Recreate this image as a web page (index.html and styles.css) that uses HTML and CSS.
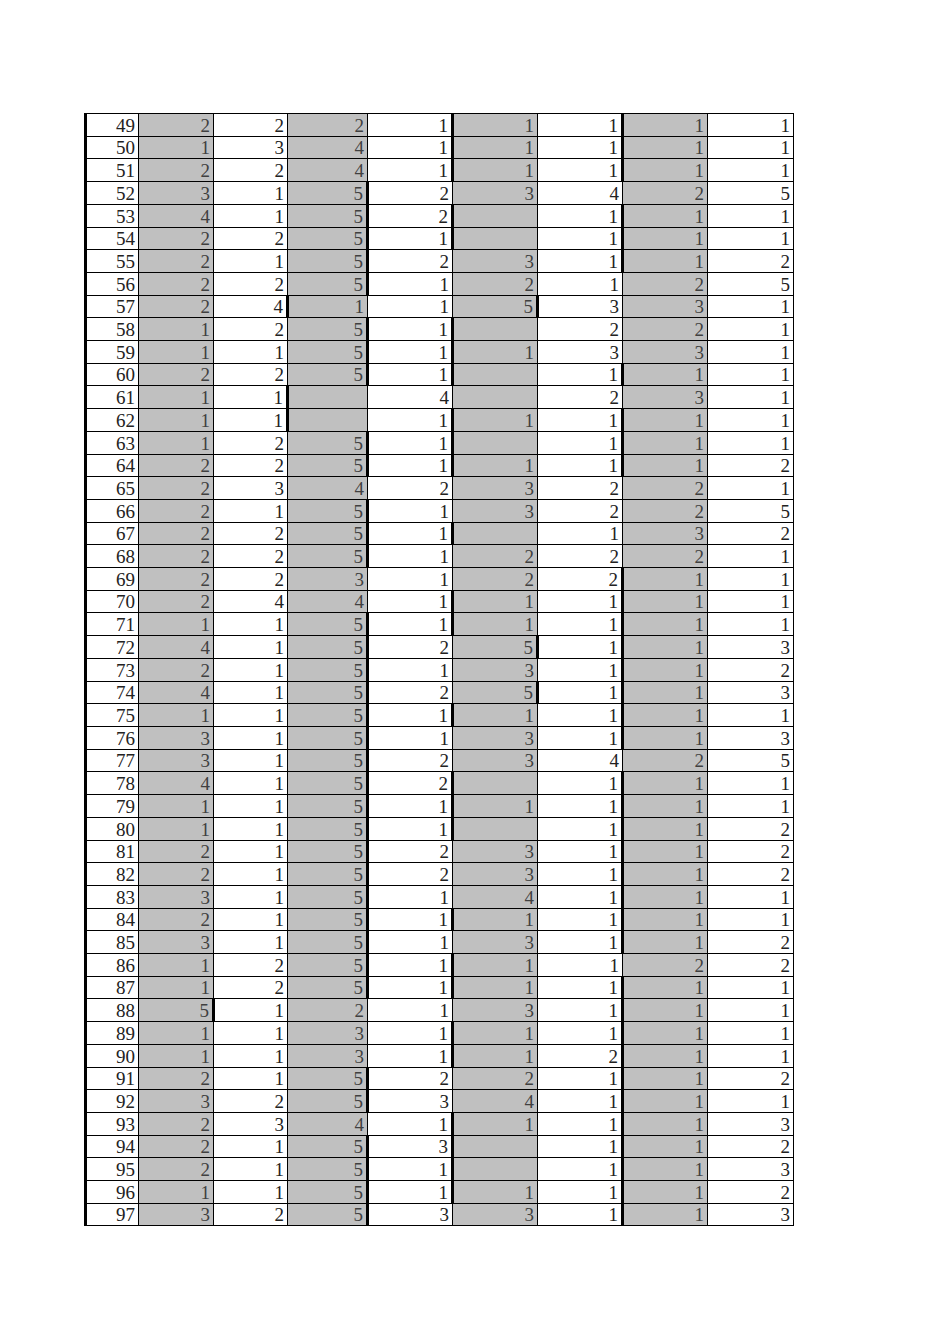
FILE: index.html
```html
<!DOCTYPE html>
<html lang="zh">
<head>
<meta charset="utf-8">
<title>Sheet</title>
<link rel="stylesheet" href="styles.css">
</head>
<body>
<div class="page">
<table class="sheet">
<colgroup>
<col class="c0"><col class="c1"><col class="c2"><col class="c3"><col class="c4"><col class="c5"><col class="c6"><col class="c7"><col class="c8">
</colgroup>
<tbody>
<tr><th>49</th><td class="g">2</td><td>2</td><td class="g">2</td><td>1</td><td class="g tl">1</td><td>1</td><td class="g tl">1</td><td>1</td></tr>
<tr><th>50</th><td class="g">1</td><td>3</td><td class="g">4</td><td>1</td><td class="g tl">1</td><td>1</td><td class="g tl">1</td><td>1</td></tr>
<tr><th>51</th><td class="g">2</td><td>2</td><td class="g">4</td><td>1</td><td class="g tl">1</td><td>1</td><td class="g tl">1</td><td>1</td></tr>
<tr><th>52</th><td class="g">3</td><td>1</td><td class="g tr">5</td><td>2</td><td class="g">3</td><td>4</td><td class="g">2</td><td>5</td></tr>
<tr><th>53</th><td class="g">4</td><td>1</td><td class="g tr">5</td><td>2</td><td class="g tl"></td><td>1</td><td class="g tl">1</td><td>1</td></tr>
<tr><th>54</th><td class="g">2</td><td>2</td><td class="g tr">5</td><td>1</td><td class="g tl"></td><td>1</td><td class="g tl">1</td><td>1</td></tr>
<tr><th>55</th><td class="g">2</td><td>1</td><td class="g tr">5</td><td>2</td><td class="g">3</td><td>1</td><td class="g tl">1</td><td>2</td></tr>
<tr><th>56</th><td class="g">2</td><td>2</td><td class="g tr">5</td><td>1</td><td class="g">2</td><td>1</td><td class="g">2</td><td>5</td></tr>
<tr><th>57</th><td class="g">2</td><td>4</td><td class="g tl">1</td><td>1</td><td class="g tr">5</td><td>3</td><td class="g">3</td><td>1</td></tr>
<tr><th>58</th><td class="g">1</td><td>2</td><td class="g tr">5</td><td>1</td><td class="g tl"></td><td>2</td><td class="g">2</td><td>1</td></tr>
<tr><th>59</th><td class="g">1</td><td>1</td><td class="g tr">5</td><td>1</td><td class="g tl">1</td><td>3</td><td class="g">3</td><td>1</td></tr>
<tr><th>60</th><td class="g">2</td><td>2</td><td class="g tr">5</td><td>1</td><td class="g tl"></td><td>1</td><td class="g tl">1</td><td>1</td></tr>
<tr><th>61</th><td class="g">1</td><td>1</td><td class="g tl"></td><td>4</td><td class="g"></td><td>2</td><td class="g">3</td><td>1</td></tr>
<tr><th>62</th><td class="g">1</td><td>1</td><td class="g tl"></td><td>1</td><td class="g tl">1</td><td>1</td><td class="g tl">1</td><td>1</td></tr>
<tr><th>63</th><td class="g">1</td><td>2</td><td class="g tr">5</td><td>1</td><td class="g tl"></td><td>1</td><td class="g tl">1</td><td>1</td></tr>
<tr><th>64</th><td class="g">2</td><td>2</td><td class="g tr">5</td><td>1</td><td class="g tl">1</td><td>1</td><td class="g tl">1</td><td>2</td></tr>
<tr><th>65</th><td class="g">2</td><td>3</td><td class="g">4</td><td>2</td><td class="g">3</td><td>2</td><td class="g">2</td><td>1</td></tr>
<tr><th>66</th><td class="g">2</td><td>1</td><td class="g tr">5</td><td>1</td><td class="g">3</td><td>2</td><td class="g">2</td><td>5</td></tr>
<tr><th>67</th><td class="g">2</td><td>2</td><td class="g tr">5</td><td>1</td><td class="g tl"></td><td>1</td><td class="g">3</td><td>2</td></tr>
<tr><th>68</th><td class="g">2</td><td>2</td><td class="g tr">5</td><td>1</td><td class="g">2</td><td>2</td><td class="g">2</td><td>1</td></tr>
<tr><th>69</th><td class="g">2</td><td>2</td><td class="g">3</td><td>1</td><td class="g">2</td><td>2</td><td class="g tl">1</td><td>1</td></tr>
<tr><th>70</th><td class="g">2</td><td>4</td><td class="g">4</td><td>1</td><td class="g tl">1</td><td>1</td><td class="g tl">1</td><td>1</td></tr>
<tr><th>71</th><td class="g">1</td><td>1</td><td class="g tr">5</td><td>1</td><td class="g tl">1</td><td>1</td><td class="g tl">1</td><td>1</td></tr>
<tr><th>72</th><td class="g">4</td><td>1</td><td class="g tr">5</td><td>2</td><td class="g tr">5</td><td>1</td><td class="g tl">1</td><td>3</td></tr>
<tr><th>73</th><td class="g">2</td><td>1</td><td class="g tr">5</td><td>1</td><td class="g">3</td><td>1</td><td class="g tl">1</td><td>2</td></tr>
<tr><th>74</th><td class="g">4</td><td>1</td><td class="g tr">5</td><td>2</td><td class="g tr">5</td><td>1</td><td class="g tl">1</td><td>3</td></tr>
<tr><th>75</th><td class="g">1</td><td>1</td><td class="g tr">5</td><td>1</td><td class="g tl">1</td><td>1</td><td class="g tl">1</td><td>1</td></tr>
<tr><th>76</th><td class="g">3</td><td>1</td><td class="g tr">5</td><td>1</td><td class="g">3</td><td>1</td><td class="g tl">1</td><td>3</td></tr>
<tr><th>77</th><td class="g">3</td><td>1</td><td class="g tr">5</td><td>2</td><td class="g">3</td><td>4</td><td class="g">2</td><td>5</td></tr>
<tr><th>78</th><td class="g">4</td><td>1</td><td class="g tr">5</td><td>2</td><td class="g tl"></td><td>1</td><td class="g tl">1</td><td>1</td></tr>
<tr><th>79</th><td class="g">1</td><td>1</td><td class="g tr">5</td><td>1</td><td class="g tl">1</td><td>1</td><td class="g tl">1</td><td>1</td></tr>
<tr><th>80</th><td class="g">1</td><td>1</td><td class="g tr">5</td><td>1</td><td class="g tl"></td><td>1</td><td class="g tl">1</td><td>2</td></tr>
<tr><th>81</th><td class="g">2</td><td>1</td><td class="g tr">5</td><td>2</td><td class="g">3</td><td>1</td><td class="g tl">1</td><td>2</td></tr>
<tr><th>82</th><td class="g">2</td><td>1</td><td class="g tr">5</td><td>2</td><td class="g">3</td><td>1</td><td class="g tl">1</td><td>2</td></tr>
<tr><th>83</th><td class="g">3</td><td>1</td><td class="g tr">5</td><td>1</td><td class="g">4</td><td>1</td><td class="g tl">1</td><td>1</td></tr>
<tr><th>84</th><td class="g">2</td><td>1</td><td class="g tr">5</td><td>1</td><td class="g tl">1</td><td>1</td><td class="g tl">1</td><td>1</td></tr>
<tr><th>85</th><td class="g">3</td><td>1</td><td class="g tr">5</td><td>1</td><td class="g">3</td><td>1</td><td class="g tl">1</td><td>2</td></tr>
<tr><th>86</th><td class="g">1</td><td>2</td><td class="g tr">5</td><td>1</td><td class="g tl">1</td><td>1</td><td class="g">2</td><td>2</td></tr>
<tr><th>87</th><td class="g">1</td><td>2</td><td class="g tr">5</td><td>1</td><td class="g tl">1</td><td>1</td><td class="g tl">1</td><td>1</td></tr>
<tr><th>88</th><td class="g tr">5</td><td>1</td><td class="g">2</td><td>1</td><td class="g">3</td><td>1</td><td class="g tl">1</td><td>1</td></tr>
<tr><th>89</th><td class="g">1</td><td>1</td><td class="g">3</td><td>1</td><td class="g tl">1</td><td>1</td><td class="g tl">1</td><td>1</td></tr>
<tr><th>90</th><td class="g">1</td><td>1</td><td class="g">3</td><td>1</td><td class="g tl">1</td><td>2</td><td class="g tl">1</td><td>1</td></tr>
<tr><th>91</th><td class="g">2</td><td>1</td><td class="g tr">5</td><td>2</td><td class="g">2</td><td>1</td><td class="g tl">1</td><td>2</td></tr>
<tr><th>92</th><td class="g">3</td><td>2</td><td class="g tr">5</td><td>3</td><td class="g">4</td><td>1</td><td class="g tl">1</td><td>1</td></tr>
<tr><th>93</th><td class="g">2</td><td>3</td><td class="g">4</td><td>1</td><td class="g tl">1</td><td>1</td><td class="g tl">1</td><td>3</td></tr>
<tr><th>94</th><td class="g">2</td><td>1</td><td class="g tr">5</td><td>3</td><td class="g tl"></td><td>1</td><td class="g tl">1</td><td>2</td></tr>
<tr><th>95</th><td class="g">2</td><td>1</td><td class="g tr">5</td><td>1</td><td class="g tl"></td><td>1</td><td class="g tl">1</td><td>3</td></tr>
<tr><th>96</th><td class="g">1</td><td>1</td><td class="g tr">5</td><td>1</td><td class="g tl">1</td><td>1</td><td class="g tl">1</td><td>2</td></tr>
<tr><th>97</th><td class="g">3</td><td>2</td><td class="g tr">5</td><td>3</td><td class="g">3</td><td>1</td><td class="g tl">1</td><td>3</td></tr>
</tbody>
</table>
</div>
</body>
</html>
```

FILE: styles.css
```css
html, body {
  margin: 0;
  padding: 0;
  background: #ffffff;
}

.page {
  padding: 113px 0 0 84px;
}

.sheet {
  border-collapse: collapse;
  table-layout: fixed;
  width: 708px;
  font-family: "Liberation Serif", "Times New Roman", serif;
  font-size: 19px;
  color: #222222;
}

.c0 { width: 53px; }
.c1 { width: 75px; }
.c2 { width: 74px; }
.c3 { width: 80px; }
.c4 { width: 85px; }
.c5 { width: 85px; }
.c6 { width: 85px; }
.c7 { width: 85px; }
.c8 { width: 86px; }

.sheet tr {
  height: 22.714px;
}

.sheet td,
.sheet th {
  border: 1px solid #000000;
  padding: 0 3px 0 0;
  text-align: right;
  vertical-align: bottom;
  font-weight: normal;
  line-height: 21px;
  overflow: hidden;
  white-space: nowrap;
}

.sheet th {
  border-left: 3px solid #000000;
  padding-right: 3px;
}

.sheet .g {
  background: #c0c0c0;
  color: #404040;
}

.sheet .tl {
  border-left: 3px solid #000000;
}

.sheet .tr {
  border-right: 3px solid #000000;
}
```
